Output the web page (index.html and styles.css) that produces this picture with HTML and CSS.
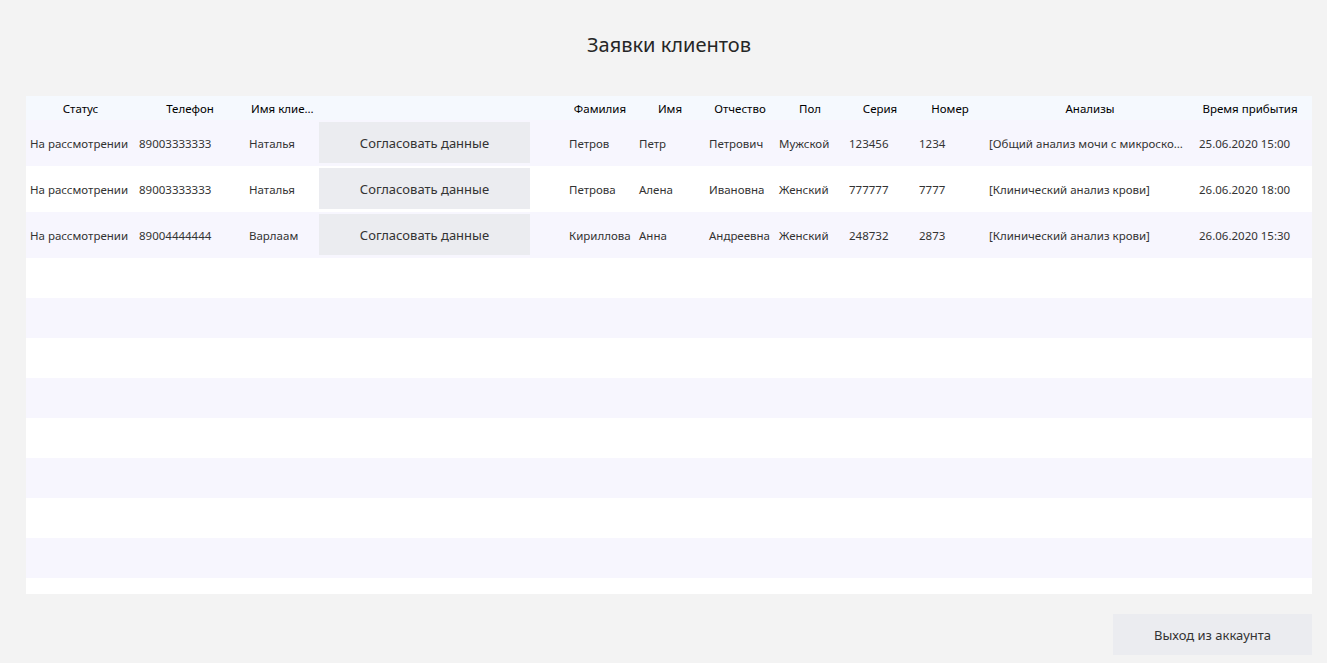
FILE: index.html
```html
<!DOCTYPE html>
<html lang="ru">
<head>
<meta charset="utf-8">
<title>Заявки клиентов</title>
<link rel="stylesheet" href="styles.css">
</head>
<body>
<div class="page">
  <h1 class="title">Заявки клиентов</h1>
  <div class="grid">
    <div class="row head">
      <div class="hc">Статус</div>
      <div class="hc">Телефон</div>
      <div class="hc ell">Имя клиента</div>
      <div class="hc"></div>
      <div class="hc">Фамилия</div>
      <div class="hc">Имя</div>
      <div class="hc">Отчество</div>
      <div class="hc">Пол</div>
      <div class="hc">Серия</div>
      <div class="hc">Номер</div>
      <div class="hc">Анализы</div>
      <div class="hc">Время прибытия</div>
    </div>
    <div class="body">
      <div class="row data">
        <div class="c">На рассмотрении</div>
        <div class="c">89003333333</div>
        <div class="c">Наталья</div>
        <div class="bc"><button class="btn">Согласовать данные</button></div>
        <div class="c">Петров</div>
        <div class="c">Петр</div>
        <div class="c">Петрович</div>
        <div class="c">Мужской</div>
        <div class="c">123456</div>
        <div class="c">1234</div>
        <div class="c ell">[Общий анализ мочи с микроскопией осадка, Клинический анализ крови]</div>
        <div class="c">25.06.2020 15:00</div>
      </div>
      <div class="row data">
        <div class="c">На рассмотрении</div>
        <div class="c">89003333333</div>
        <div class="c">Наталья</div>
        <div class="bc"><button class="btn">Согласовать данные</button></div>
        <div class="c">Петрова</div>
        <div class="c">Алена</div>
        <div class="c">Ивановна</div>
        <div class="c">Женский</div>
        <div class="c">777777</div>
        <div class="c">7777</div>
        <div class="c ell">[Клинический анализ крови]</div>
        <div class="c">26.06.2020 18:00</div>
      </div>
      <div class="row data">
        <div class="c">На рассмотрении</div>
        <div class="c">89004444444</div>
        <div class="c">Варлаам</div>
        <div class="bc"><button class="btn">Согласовать данные</button></div>
        <div class="c">Кириллова</div>
        <div class="c">Анна</div>
        <div class="c">Андреевна</div>
        <div class="c">Женский</div>
        <div class="c">248732</div>
        <div class="c">2873</div>
        <div class="c ell">[Клинический анализ крови]</div>
        <div class="c">26.06.2020 15:30</div>
      </div>
      <div class="row empty"></div>
      <div class="row empty"></div>
      <div class="row empty"></div>
      <div class="row empty"></div>
      <div class="row empty"></div>
      <div class="row empty"></div>
      <div class="row empty"></div>
      <div class="row empty"></div>
      <div class="row empty"></div>
    </div>
  </div>
  <div class="footer">
    <button class="btn exit">Выход из аккаунта</button>
  </div>
</div>
</body>
</html>
```

FILE: styles.css
```css
* { box-sizing: border-box; }
html, body {
  margin: 0;
  padding: 0;
  background: #f3f3f3;
  font-family: "Noto Sans", "Open Sans", sans-serif;
  color: #2b2b2b;
}
.page {
  width: 1327px;
  height: 663px;
  display: flex;
  flex-direction: column;
  padding: 0 15px 8px 26px;
}
.title {
  flex: none;
  margin: 0;
  height: 96px;
  padding-top: 31px;
  font-size: 20px;
  font-weight: 400;
  line-height: 28px;
  text-align: center;
  color: #262626;
}
.grid {
  flex: none;
  height: 498px;
  overflow: hidden;
  background: #ffffff;
  display: flex;
  flex-direction: column;
}
.body {
  flex: none;
  display: flex;
  flex-direction: column;
}
.row {
  flex: none;
  display: grid;
  grid-template-columns: 109px 110px 70px 250px 70px 70px 70px 70px 70px 70px 210px 110px 1fr;
  align-items: center;
}
.head {
  height: 24px;
  background: #f5f9fe;
  font-size: 11.5px;
  color: #000;
}
.hc {
  text-align: center;
  white-space: nowrap;
  overflow: hidden;
  padding: 0 4px;
}
.hc.ell {
  text-overflow: ellipsis;
  text-align: left;
  padding: 0 0 0 6px;
}
.body .row:nth-child(odd) { background: #f7f6fe; }
.body .row:nth-child(even) { background: #ffffff; }
.data { height: 46px; font-size: 11.5px; color: #333; }
.empty { height: 40px; }
.c {
  padding: 0 4px;
  white-space: nowrap;
  overflow: hidden;
}
.c.ell { text-overflow: ellipsis; padding-right: 6px; }
.bc {
  height: 46px;
  padding: 2px 0 3px 4px;
}
.btn {
  border: none;
  margin: 0;
  background: #ebecf0;
  font-family: inherit;
  font-size: 13px;
  color: #333;
  height: 41px;
  width: 211px;
  padding: 0;
}
.footer {
  flex: none;
  display: flex;
  justify-content: flex-end;
  padding-top: 20px;
}
.exit { width: 199px; }
```
